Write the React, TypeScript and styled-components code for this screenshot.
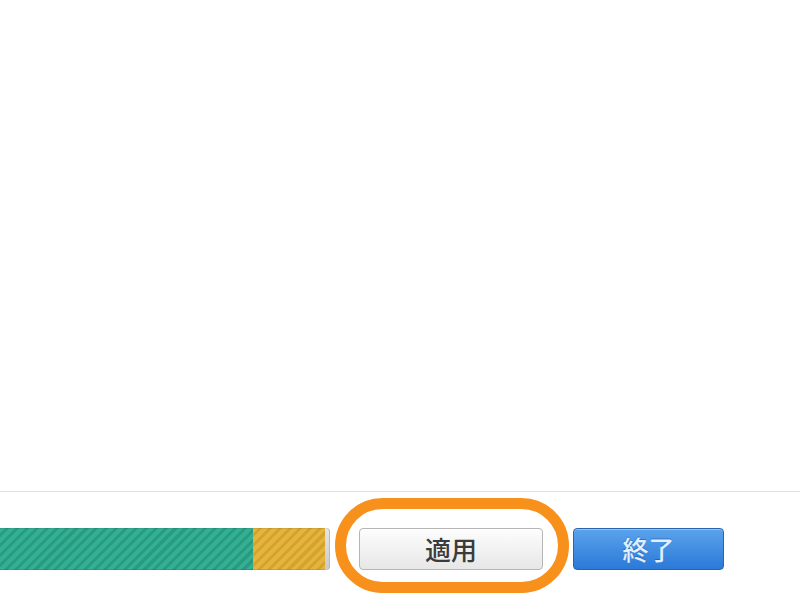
import styled, { createGlobalStyle } from "styled-components";

const GlobalStyle = createGlobalStyle`
  html, body {
    margin: 0;
    padding: 0;
    background: #ffffff;
  }
  body {
    font-family: "Noto Sans CJK JP", "Noto Sans", sans-serif;
  }
`;

const App = () => {
  return (
    <Page>
      <GlobalStyle />
      <Content />
      <Footer>
        <StorageBar>
          <Segment color="#33b094" stripe="#299b81" width={253} />
          <Segment color="#e4b43c" stripe="#d4a32e" width={72} />
        </StorageBar>
        <ApplyWrap>
          <ApplyButton>適用</ApplyButton>
          <Highlight />
        </ApplyWrap>
        <DoneButton>終了</DoneButton>
      </Footer>
    </Page>
  );
};

const Page = styled.div`
  width: 100%;
  height: 604px;
  display: flex;
  flex-direction: column;
  overflow: hidden;
`;

const Content = styled.div`
  flex: 1;
`;

const Footer = styled.div`
  height: 113px;
  border-top: 1px solid #e2e2e2;
  box-sizing: border-box;
  display: flex;
  align-items: flex-start;
  padding-top: 36px;
`;

const StorageBar = styled.div`
  width: 330px;
  height: 42px;
  display: flex;
  background: linear-gradient(#e6e6e6, #c9c9c9);
  border-radius: 0 4px 4px 0;
  box-shadow: inset -1px 0 0 #b9b9b9;
  overflow: hidden;
`;

const Segment = styled.div<{ color: string; stripe: string; width: number }>`
  width: ${(p) => p.width}px;
  height: 100%;
  background: repeating-linear-gradient(
    135deg,
    ${(p) => p.color} 0,
    ${(p) => p.color} 4px,
    ${(p) => p.stripe} 4px,
    ${(p) => p.stripe} 7px
  );
  box-shadow: inset 0 1px 0 rgba(0, 0, 0, 0.08), inset 0 -1px 0 rgba(0, 0, 0, 0.1);
`;

const ApplyWrap = styled.div`
  position: relative;
  margin-left: 29px;
`;

const BaseButton = styled.button`
  height: 42px;
  box-sizing: border-box;
  border-radius: 4px;
  font-family: "Noto Sans CJK JP", sans-serif;
  font-size: 26px;
  font-weight: 500;
  line-height: 1;
  padding: 0;
  display: flex;
  align-items: center;
  justify-content: center;
  cursor: pointer;
`;

const ApplyButton = styled(BaseButton)`
  width: 184px;
  color: #3b3b3b;
  background: linear-gradient(#fdfdfd, #e7e7e7);
  border: 1px solid #b5b5b5;
  box-shadow: inset 0 1px 0 #ffffff;
`;

const Highlight = styled.div`
  position: absolute;
  top: -30px;
  left: -24px;
  right: -26px;
  bottom: -23px;
  border: 11px solid #f8901c;
  border-radius: 48px;
  pointer-events: none;
`;

const DoneButton = styled(BaseButton)`
  width: 151px;
  margin-left: 30px;
  color: #e3efff;
  background: linear-gradient(#5aa3ec, #2b79d8);
  border: 1px solid #2a64ad;
  box-shadow: inset 0 1px 0 rgba(255, 255, 255, 0.35);
  text-shadow: 0 -1px 0 rgba(0, 40, 100, 0.35);
`;

export default App;
